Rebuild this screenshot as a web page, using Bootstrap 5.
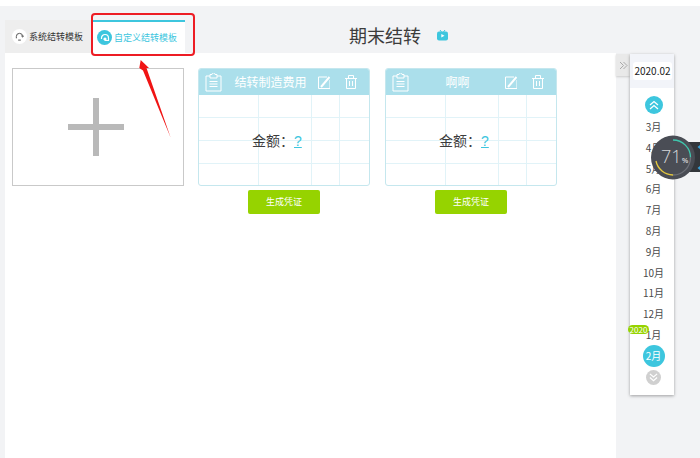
<!DOCTYPE html>
<html lang="zh">
<head>
<meta charset="utf-8">
<title>期末结转</title>
<link rel="stylesheet" href="https://cdn.jsdelivr.net/npm/bootstrap@5.3.0/dist/css/bootstrap.min.css">
<style>
html,body{height:458px;overflow:hidden}
body{background:#fff;font-family:"Noto Sans CJK SC","Liberation Sans",sans-serif;color:#333;position:relative;padding-top:6px}
.pg{height:452px;background:#f2f3f5;padding-left:5px}
.hd{height:47px;position:relative}
.tabs{position:absolute;left:0;top:14px;height:33px;width:180px;background:#eeeeee}
.tb{height:33px;font-size:9px;white-space:nowrap;gap:2px}
.tb1{width:88px;padding-left:7px;color:#333}
.tb2{width:92px;padding-left:4px;background:#fff;color:#3dc6de;border-top:2px solid #3dc6de}
.tic{width:15px;height:15px;border-radius:50%;background:#fff;flex:none}
.tb2 .tic{background:#3dc6de}
.ttl{font-size:18px;line-height:24px;color:#3c3c3c;padding-top:17px;margin-left:344px}
.main{width:611px;height:405px;background:#fff;padding:15px 7px;flex:none}
.addb{width:172px;height:118px;border:1px solid #c9c9c9;flex:none;margin-right:14px}
.addb svg{margin-right:4px}
.cw{width:172px;flex:none;margin-right:15px}
.cd{height:118px;border:1px solid #c5e7ee;border-radius:3px;overflow:hidden;position:relative}
.ch{height:26px;background:#abdfeb;color:#fff;font-size:12px;line-height:26px;padding-left:6px;padding-right:12px}
.ch .nm{flex:1;text-align:center;white-space:nowrap;padding-left:2px;padding-right:1px}
.ch .tr{margin-left:15px}
.gd{display:grid;grid-template-columns:60px 53px 28px 1fr;grid-auto-rows:23px}
.gd i{border-right:1px solid #e1f3f8;border-bottom:1px solid #e1f3f8}
.gd i:nth-child(4n){border-right:0}
.gd i:nth-last-child(-n+4){border-bottom:0}
.amt{position:absolute;left:53px;top:60px;font-size:14px;line-height:22px;color:#3c3c3c;white-space:nowrap;font-feature-settings:"palt"}
.amt u{color:#3dc6de;margin-left:7px;font-size:14px;font-family:"Liberation Sans",sans-serif}
.gen{display:block;width:72px;height:24px;margin:4px auto 0;padding:0;background:#96d300;border:0;border-radius:2px;color:#fff;font-size:9px;line-height:24px}
.hdl{width:14px;height:22px;background:#e9e9e9;flex:none;margin-top:1px;box-shadow:0 1px 2px #ccc}
.pnl{width:44px;height:341px;background:#fff;box-shadow:0 1px 3px rgba(0,0,0,.35);margin-top:1px;flex:none;font-size:10px}
.yr{height:34px;background:#f2f4f9;padding:8px 2px 8px 3px}
.yrv{height:18px;background:#fff;border-radius:3px;line-height:18px;text-align:center;color:#222;font-size:10px}
.mls{padding-left:3px}
.cup,.cdn{border-radius:50%;margin-left:auto;margin-right:auto}
.cup{width:18px;height:18px;background:#3dc6de;margin-top:8px;margin-bottom:2px}
.mth{height:20.8px;line-height:21px;text-align:center;color:#4a4a4a}
.cur{width:22px;height:22px;line-height:22px;border-radius:50%;background:#3dc6de;color:#fff;margin:0 auto}
.cdn{width:15px;height:15px;background:#d0d0d0;margin-top:3px}
.ybd{position:absolute;left:628px;top:325px;width:21px;height:9px;background:#96d300;border-radius:5px;color:#fff;font-size:8px;line-height:9px;text-align:center}
.rbx{position:absolute;left:91px;top:13px;width:104px;height:43px;border:2px solid #ed1c24;border-radius:4px}
.arw{position:absolute;left:135px;top:58px}
.wpill{position:absolute;left:680px;top:142px;width:20px;height:30px;background:#33363b}
.wcir{position:absolute;left:651px;top:135px}
</style>
</head>
<body>
<div class="pg">
  <div class="hd">
    <div class="tabs d-flex">
      <div class="tb tb1 d-flex align-items-center">
        <span class="tic d-flex align-items-center justify-content-center"><svg width="9" height="9" viewBox="0 0 10 10" fill="none" stroke="#555" stroke-width="1.1"><path d="M1.500 7V5a3.500 3.500 0 0 1 7 0v.5M8.500 5.500 7 4.300M8.500 5.500 9.800 4.300M3.500 9h3"/></svg></span>
        <span>系统结转模板</span>
      </div>
      <div class="tb tb2 d-flex align-items-center">
        <span class="tic d-flex align-items-center justify-content-center"><svg width="10" height="10" viewBox="0 0 10 10" fill="none" stroke="#fff" stroke-width="1.2"><path d="M1.500 6V5a3.500 3.500 0 0 1 7 0v2.500H5V5M3.500 6.500 5 5l1.500 1.500"/></svg></span>
        <span>自定义结转模板</span>
      </div>
    </div>
    <div class="ttl d-flex align-items-center">
      <span>期末结转</span>
      <svg class="ms-3" width="11" height="11" viewBox="0 0 11 11"><path d="M3 0 4.500 2M8 0 6.500 2" stroke="#3dc6de" stroke-width="1"/><rect y="1.500" width="11" height="9" rx="2" fill="#3dc6de"/><path d="M4.300 4v3.500L7.500 5.700z" fill="#fff"/></svg>
    </div>
  </div>
  <div class="d-flex">
    <div class="main d-flex align-items-start">
      <div class="addb d-flex align-items-center justify-content-center">
        <svg width="56" height="58" viewBox="0 0 56 58"><path d="M28 0v58M0 29h56" stroke="#b9b9b9" stroke-width="6"/></svg>
      </div>
      <div class="cw">
        <div class="cd">
          <div class="ch d-flex align-items-center">
            <svg width="17" height="19" viewBox="0 0 17 19" fill="none" stroke="#fff"><path d="M5 3H1v15h15V3h-4M5 1.500h2a1.500 1.500 0 0 1 3 0h2V5H5zM4.500 8.500h8M4.500 11h8M4.500 13.500h8"/></svg>
            <span class="nm">结转制造费用</span>
            <svg width="12" height="13" viewBox="0 0 12 13" fill="none" stroke="#fff"><path d="M9 1H.5v11.500H12V4"/><path d="M3 11 11.500 1" stroke-width="2"/></svg>
            <svg class="tr" width="12" height="14" viewBox="0 0 12 14" fill="none" stroke="#fff"><path d="M0 3.500h12M3.500 3.500V.5h5v3M1.500 3.500v10h9v-10M4.500 6v5M7.500 6v5"/></svg>
          </div>
          <div class="gd"><i></i><i></i><i></i><i></i><i></i><i></i><i></i><i></i><i></i><i></i><i></i><i></i><i></i><i></i><i></i><i></i></div>
          <div class="amt">金额：<u>?</u></div>
        </div>
        <button type="button" class="btn gen">生成凭证</button>
      </div>
      <div class="cw">
        <div class="cd">
          <div class="ch d-flex align-items-center">
            <svg width="17" height="19" viewBox="0 0 17 19" fill="none" stroke="#fff"><path d="M5 3H1v15h15V3h-4M5 1.500h2a1.500 1.500 0 0 1 3 0h2V5H5zM4.500 8.500h8M4.500 11h8M4.500 13.500h8"/></svg>
            <span class="nm">啊啊</span>
            <svg width="12" height="13" viewBox="0 0 12 13" fill="none" stroke="#fff"><path d="M9 1H.5v11.500H12V4"/><path d="M3 11 11.500 1" stroke-width="2"/></svg>
            <svg class="tr" width="12" height="14" viewBox="0 0 12 14" fill="none" stroke="#fff"><path d="M0 3.500h12M3.500 3.500V.5h5v3M1.500 3.500v10h9v-10M4.500 6v5M7.500 6v5"/></svg>
          </div>
          <div class="gd"><i></i><i></i><i></i><i></i><i></i><i></i><i></i><i></i><i></i><i></i><i></i><i></i><i></i><i></i><i></i><i></i></div>
          <div class="amt">金额：<u>?</u></div>
        </div>
        <button type="button" class="btn gen">生成凭证</button>
      </div>
    </div>
    <div class="hdl d-flex align-items-center justify-content-center">
      <svg width="9" height="9" viewBox="0 0 9 9" fill="none" stroke="#aaa"><path d="M1 1l3.500 3.500L1 8M4.500 1 8 4.500 4.500 8"/></svg>
    </div>
    <div class="pnl">
      <div class="yr"><div class="yrv">2020.02</div></div>
      <div class="mls">
        <div class="cup d-flex align-items-center justify-content-center"><svg width="10" height="10" viewBox="0 0 10 10" fill="none" stroke="#fff" stroke-width="1.300"><path d="M1 5 5 1.500 9 5M1 9 5 5.500 9 9"/></svg></div>
        <div class="mth">3月</div><div class="mth">4月</div><div class="mth">5月</div><div class="mth">6月</div><div class="mth">7月</div><div class="mth">8月</div><div class="mth">9月</div><div class="mth">10月</div><div class="mth">11月</div><div class="mth">12月</div><div class="mth">1月</div>
        <div class="mth cur">2月</div>
        <div class="cdn d-flex align-items-center justify-content-center"><svg width="9" height="9" viewBox="0 0 10 10" fill="none" stroke="#fff" stroke-width="1.300"><path d="M1 1 5 4.500 9 1M1 5 5 8.500 9 5"/></svg></div>
      </div>
    </div>
  </div>
</div>
<span class="ybd">2020</span>
<div class="rbx"></div>
<svg class="arw" width="40" height="84" viewBox="0 0 40 84"><path d="M5.700 2 14 10 11.500 10 35.700 79.700 8 12.500 4.300 10z" fill="#f01414"/></svg>
<div class="wpill"></div>
<svg class="wcir" width="49" height="45" viewBox="0 0 49 45"><path d="M46.500 12l2.500-2v4zM46.500 33l2.500-2v4z" fill="#3aa0d8"/><circle cx="22" cy="22.500" r="22" fill="#4a4d55"/><path d="M22 5A17.500 17.500 0 0 1 39.500 22.500" fill="none" stroke="#3fc6ad" stroke-width="1.300"/><path d="M39.500 22.500A17.500 17.500 0 0 1 22 40" fill="none" stroke="#6d7078" stroke-width="1.300"/><path d="M22 40A17.500 17.500 0 0 1 5 26" fill="none" stroke="#e5c93e" stroke-width="1.300"/><text x="10" y="28" font-size="18" font-weight="300" fill="#d5d6d8" font-family="Open Sans">71</text><text x="31" y="28" font-size="7" font-weight="700" fill="#d5d6d8" font-family="Liberation Sans">%</text></svg>
</body>
</html>
